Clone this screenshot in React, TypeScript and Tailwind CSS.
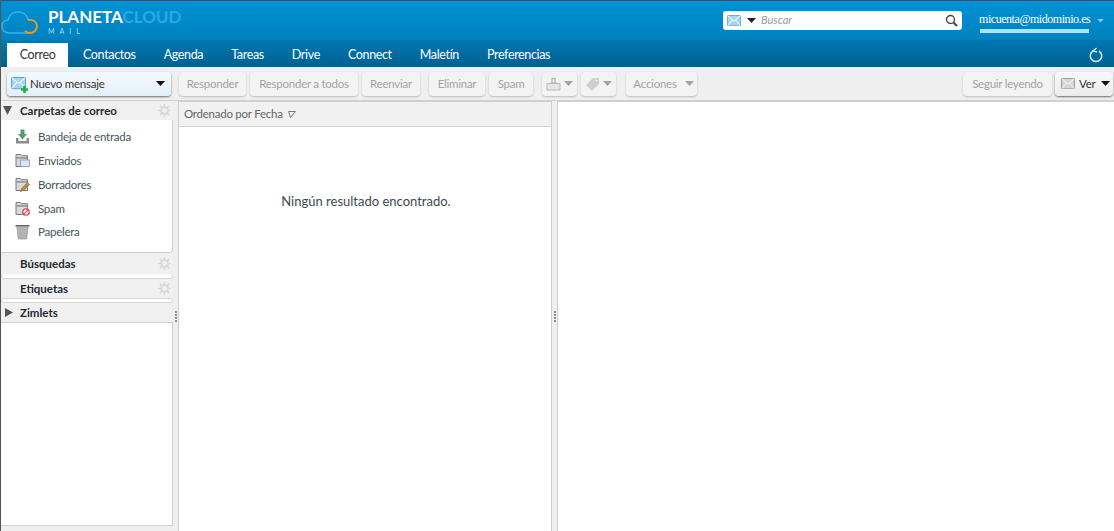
import React from "react";

const tabs = ["Contactos", "Agenda", "Tareas", "Drive", "Connect", "Maletín", "Preferencias"];

function Caret({ className = "" }: { className?: string }) {
  return (
    <svg width="9" height="5" viewBox="0 0 9 5" className={className}>
      <path d="M0 0h9L4.5 5z" fill="currentColor" />
    </svg>
  );
}

function Envelope({ size = 16, muted = false }: { size?: number; muted?: boolean }) {
  return (
    <svg width={size} height={(size * 13) / 16} viewBox="0 0 16 13">
      <rect x="0.5" y="0.5" width="15" height="12" rx="1" fill={muted ? "#d4d4d4" : "#a8d4f2"} stroke={muted ? "#8f8f8f" : "#5f9cc9"} />
      <path d="M1 1l7 6 7-6M1 12l5-6M15 12l-5-6" fill="none" stroke={muted ? "#f2f2f2" : "#eaf6ff"} strokeWidth="1.2" />
    </svg>
  );
}

function Gear() {
  return (
    <svg width="13" height="13" viewBox="0 0 12 12" className="text-[#dadada]">
      <circle cx="6" cy="6" r="3.2" fill="none" stroke="currentColor" strokeWidth="1.8" />
      <path d="M6 0v2.4M6 9.6V12M0 6h2.4M9.6 6H12M1.8 1.8l1.7 1.7M8.5 8.5l1.7 1.7M10.2 1.8L8.5 3.5M3.5 8.5l-1.7 1.7" stroke="currentColor" strokeWidth="1.6" />
    </svg>
  );
}

function FolderBase({ children }: { children?: React.ReactNode }) {
  return (
    <svg width="15" height="15" viewBox="0 0 15 15">
      <path d="M1 13.5V1.5h4.5l1 1.2h6v10.8z" fill="#d8d8d8" stroke="#7c7c7c" />
      <rect x="1.5" y="4.2" width="10.5" height="1.4" fill="#8b8b8b" />
      {children}
    </svg>
  );
}

const folders: { name: string; icon: React.ReactNode }[] = [
  {
    name: "Bandeja de entrada",
    icon: (
      <svg width="15" height="16" viewBox="0 0 15 16">
        <path d="M1 9v5.5h13V9h-2.5v3h-8V9z" fill="#8c8c8c" />
        <path d="M5.5 0.5h4V5H12l-4.5 5.4L3 5h2.5z" fill="#5e9a6e" />
      </svg>
    ),
  },
  {
    name: "Enviados",
    icon: (
      <FolderBase>
        <rect x="5.5" y="7" width="9" height="6.5" fill="#dbe7f3" stroke="#7e9cb9" strokeWidth="0.8" />
      </FolderBase>
    ),
  },
  {
    name: "Borradores",
    icon: (
      <FolderBase>
        <path d="M5.5 14.5l1-3 6-6 2 2-6 6z" fill="#c08a3c" stroke="#7a5a2a" strokeWidth="0.5" />
      </FolderBase>
    ),
  },
  {
    name: "Spam",
    icon: (
      <FolderBase>
        <circle cx="11" cy="11" r="3.2" fill="#fff" stroke="#d4474f" strokeWidth="1.3" />
        <path d="M8.8 13.2l4.4-4.4" stroke="#d4474f" strokeWidth="1.2" />
      </FolderBase>
    ),
  },
  {
    name: "Papelera",
    icon: (
      <svg width="16" height="16" viewBox="0 0 15 15">
        <path d="M0.5 0.5h14v1.6h-14z" fill="#666" />
        <path d="M1.8 2.1h11.4L11.6 14.5H3.4z" fill="#b3b3b3" stroke="#8a8a8a" strokeWidth="0.6" />
      </svg>
    ),
  },
];

function ToolButton({ children, className = "" }: { children: React.ReactNode; className?: string }) {
  return (
    <div className={`flex h-6 items-center justify-center rounded-sm bg-[#f3f3f3] text-[11.5px] tracking-[-0.25px] text-[#a3a3a3] shadow-[0_1px_2px_rgba(0,0,0,0.22)] ${className}`}>
      {children}
    </div>
  );
}

function Sash() {
  return (
    <div className="flex w-[5px] shrink-0 flex-col items-center justify-center gap-px bg-[#efefef]">
      {[0, 1, 2, 3].map((i) => (
        <span key={i} className="h-0.5 w-0.5 bg-[#8c8c8c]" />
      ))}
    </div>
  );
}

function SectionHeader({ title, gear = true, arrow }: { title: string; gear?: boolean; arrow?: React.ReactNode }) {
  return (
    <div className="flex h-[19px] items-center bg-[#f0f0f0] pr-0.5">
      <div className="flex w-[19px] shrink-0 justify-center pr-1.5">{arrow}</div>
      <span className="flex-1 text-[11.5px] font-bold text-[#1f2a30]">{title}</span>
      {gear && <Gear />}
    </div>
  );
}

export default function App() {
  return (
    <div className="flex h-[531px] w-[1114px] flex-col overflow-hidden border-l border-[#555] bg-[#efefef] font-['Lato',sans-serif]">
      {/* Top banner */}
      <header className="flex h-10 shrink-0 items-start border-t border-[#1c5a7e] bg-gradient-to-b from-[#0092d3] to-[#0081bf]">
        <div className="flex h-full items-center pt-0.5">
          <svg width="38" height="26" viewBox="0 0 38 26" fill="none">
            <path d="M9 24C4 24 1 21 1 17c0-3 2-6 6-6 1-5 5-8 10-8 5 0 9 3 10 8" stroke="#33b5e8" strokeWidth="1.6" />
            <path d="M9 24h18c1 0 2 0 3-1" stroke="#33b5e8" strokeWidth="1.6" />
            <path d="M27 11c5-1 9 2 9 6s-3 7-7 7c-2 0-4-1-5-2" stroke="#f39a1e" strokeWidth="1.8" />
          </svg>
          <div className="ml-[9px] flex w-[133px] flex-col">
            <div className="text-[17px] leading-[18px] font-bold whitespace-nowrap">
              <span className="text-white">PLANETA</span>
              <span className="text-[#29abe2]">CLOUD</span>
            </div>
            <div className="mt-px text-[7px] leading-[9px] tracking-[5px] text-[#9fdcf5]">MAIL</div>
          </div>
        </div>
        <div className="ml-[542px] mt-2.5 flex h-[19px] w-[239px] shrink-0 items-center rounded-[3px] bg-white px-1">
          <Envelope size={14} />
          <Caret className="ml-1.5 text-[#222]" />
          <span className="ml-[5px] flex-1 text-[11px] italic text-[#9a9a9a]">Buscar</span>
          <svg width="13" height="13" viewBox="0 0 13 13" fill="none" stroke="#444">
            <circle cx="5.5" cy="5.5" r="4" strokeWidth="1.3" />
            <path d="M8.5 8.5l3.5 3.5" strokeWidth="2" />
          </svg>
        </div>
        <div className="ml-[17px] mt-[11px] flex flex-col">
          <div className="flex items-center">
            <span className="whitespace-nowrap font-['Liberation_Serif',serif] text-xs leading-[14px] tracking-[-0.45px] text-white">micuenta@midominio.es</span>
            <Caret className="ml-[6px] mt-0.5 shrink-0 scale-75 text-[#7fd0f0]" />
          </div>
          <div className="ml-px mt-[3px] h-1 w-[109px] bg-[#a8e6f5]" />
        </div>
      </header>

      {/* Tabs */}
      <nav className="flex h-[27px] shrink-0 items-end bg-gradient-to-b from-[#0078b3] to-[#00608f] pl-1.5">
        <div className="flex h-[24px] w-[61px] items-center justify-center bg-white text-[12.5px] tracking-[-0.35px] text-[#333]">Correo</div>
        <div className="ml-[15px] flex h-[24px] gap-7">
          {tabs.map((tab) => (
            <span key={tab} className="flex items-center text-[12.5px] tracking-[-0.35px] text-white">{tab}</span>
          ))}
        </div>
        <svg width="14" height="16" viewBox="0 0 14 16" fill="none" className="mb-1 ml-auto mr-[11px]" stroke="#c9effb" strokeWidth="1.5">
          <path d="M4 4a5.7 5.7 0 1 0 6 0" />
          <path d="M7.5 1l-3.5 3 4 1" strokeWidth="1.3" />
        </svg>
      </nav>

      {/* Toolbar */}
      <div className="flex h-[34px] shrink-0 items-center border-b border-[#cfcfcf] bg-[#efefef] pl-1.5 pr-px">
        <div className="mr-2 flex h-[24px] w-[164px] items-center rounded-sm bg-gradient-to-b from-[#f4fbfe] to-[#e2f0f7] pl-1 pr-[6px] text-[11.5px] tracking-[-0.25px] text-[#333] shadow-[0_1px_2px_rgba(0,0,0,0.55)]">
          <span className="relative flex">
            <Envelope size={15} />
            <svg width="7" height="7" viewBox="0 0 7 7" className="absolute -bottom-[3px] -right-0.5">
              <path d="M2.2 0h2.6v2.2H7v2.6H4.8V7H2.2V4.8H0V2.2h2.2z" fill="#22b14c" />
            </svg>
          </span>
          <span className="ml-1 flex-1">Nuevo mensaje</span>
          <Caret className="text-[#111]" />
        </div>
        <div className="flex gap-1">
          <ToolButton className="w-[67px]">Responder</ToolButton>
          <ToolButton className="w-[108px]">Responder a todos</ToolButton>
          <ToolButton className="w-[58px]">Reenviar</ToolButton>
        </div>
        <div className="ml-[9px] flex gap-1">
          <ToolButton className="w-[56px]">Eliminar</ToolButton>
          <ToolButton className="w-[44px]">Spam</ToolButton>
        </div>
        <div className="ml-[9px] flex gap-1">
          <ToolButton className="w-[35px] gap-[3px]">
            <svg width="15" height="14" viewBox="0 0 15 14" fill="none" stroke="#b8b8b8">
              <path d="M1 6.5h13v6.5H1z" fill="#e6e6e6" />
              <path d="M6 6V1.5h3V6M4.5 6h6" strokeWidth="1.4" />
            </svg>
            <Caret className="text-[#a3a3a3]" />
          </ToolButton>
          <ToolButton className="w-[35px] gap-[3px]">
            <svg width="15" height="14" viewBox="0 0 15 14">
              <path d="M1 8l7-7h6v6l-7 7z" fill="#cfcfcf" />
              <circle cx="11.5" cy="3.5" r="1" fill="#f3f3f3" />
            </svg>
            <Caret className="text-[#a3a3a3]" />
          </ToolButton>
        </div>
        <ToolButton className="ml-2.5 w-[71px] gap-2 pl-1">
          Acciones
          <Caret className="text-[#a3a3a3]" />
        </ToolButton>
        <ToolButton className="ml-auto w-[89px]">Seguir leyendo</ToolButton>
        <div className="ml-[3px] flex h-[24px] w-[58px] items-center rounded-sm bg-gradient-to-b from-[#fafafa] to-[#ebebeb] pl-1.5 pr-[3px] text-[11.5px] tracking-[-0.25px] text-[#333] shadow-[0_1px_2px_rgba(0,0,0,0.55)]">
          <Envelope size={14} muted />
          <span className="ml-1 flex-1">Ver</span>
          <Caret className="text-[#111]" />
        </div>
      </div>

      {/* Main panes */}
      <div className="flex min-h-0 flex-1">
        <aside className="flex w-[172px] shrink-0 flex-col pb-[5px]">
          <SectionHeader
            title="Carpetas de correo"
            arrow={
              <svg width="9" height="9" viewBox="0 0 9 9" className="text-[#555]">
                <path d="M0 0h9L4.5 9z" fill="currentColor" />
              </svg>
            }
          />
          <div className="flex h-[133px] flex-col rounded-br-sm border-r border-b border-[#cfcfcf] bg-white pl-[14px] pt-[5px]">
            {folders.map((f) => (
              <div key={f.name} className="flex h-[23.8px] items-center gap-2 text-[11.5px] tracking-[-0.25px] text-[#46555c]">
                <span className="flex w-[15px] justify-center">{f.icon}</span>
                {f.name}
              </div>
            ))}
          </div>
          <div className="mt-px"><SectionHeader title="Búsquedas" /></div>
          <div className="mt-px h-[5px] rounded-sm border border-t-0 border-[#d6d6d6] bg-white" />
          <SectionHeader title="Etiquetas" />
          <div className="h-[5px] rounded-sm border border-[#d6d6d6] bg-white" />
          <SectionHeader
            title="Zimlets"
            gear={false}
            arrow={
              <svg width="9" height="9" viewBox="0 0 9 9" className="ml-1 text-[#555]">
                <path d="M0 0l8 4.5L0 9z" fill="currentColor" />
              </svg>
            }
          />
          <div className="flex-1 border-r border-b border-t border-[#d0d0d0] bg-white" />
        </aside>
        <Sash />
        <section className="flex w-[374px] shrink-0 flex-col border-x border-t border-[#cfcfcf]">
          <div className="flex h-[25px] shrink-0 items-center gap-[5px] border-b border-[#cfcfcf] bg-[#f1f1f1] pl-[5px] text-[11.5px] tracking-[-0.25px] text-[#666]">
            Ordenado por Fecha
            <svg width="8" height="7" viewBox="0 0 8 7" fill="none" stroke="#777">
              <path d="M0.5 0.5h7L2.5 6.5z" />
            </svg>
          </div>
          <div className="flex-1 bg-white pl-0.5 pt-[65px] text-center text-[13px] text-[#3c4a50]">Ningún resultado encontrado.</div>
        </section>
        <Sash />
        <section className="flex-1 border-l border-t border-[#cfcfcf] bg-white" />
      </div>
    </div>
  );
}
